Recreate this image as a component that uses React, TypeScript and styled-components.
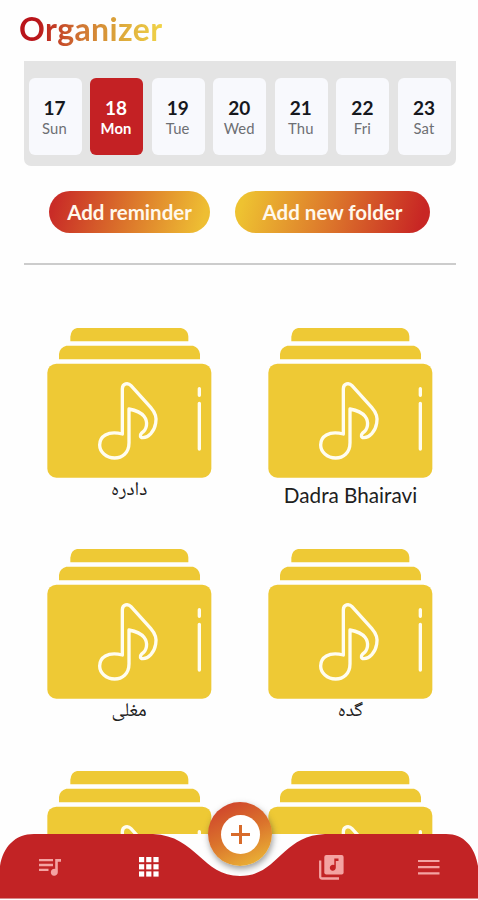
import React from 'react';
import styled, { createGlobalStyle } from 'styled-components';

const GlobalStyle = createGlobalStyle`
  * { box-sizing: border-box; }
  body { margin: 0; background: #fefefe; font-family: Lato, sans-serif; }
  button { font: inherit; border: 0; padding: 0; background: none; cursor: pointer; }
`;

const Screen = styled.div`
  position: relative;
  width: 478px;
  height: 900px;
  overflow: hidden;
  display: flex;
  flex-direction: column;
  background: #fefefe;
`;

const Title = styled.h1`
  margin: 9px 0 0 19px;
  height: 52px;
  align-self: flex-start;
  font-size: 32px;
  line-height: 40px;
  font-weight: 700;
  letter-spacing: 0.4px;
  color: transparent;
  background: linear-gradient(90deg, #b9141a 12%, #d07433 42%, #dba43a 68%, #f1d548 100%);
  background-clip: text;
  -webkit-background-clip: text;
`;

const Week = styled.div`
  display: flex;
  justify-content: space-between;
  width: 432px;
  height: 105px;
  margin-left: 24px;
  padding: 17px 5px 10px 4.5px;
  border-radius: 0 0 7px 7px;
  background: #e4e4e4;
`;

const Day = styled.button<{ $active?: boolean }>`
  display: flex;
  flex-direction: column;
  align-items: center;
  width: 53px;
  height: 77px;
  padding-top: 18px;
  padding-right: 1px;
  border-radius: 6px;
  background: ${(p) => (p.$active ? '#c42124' : '#f8f9fd')};
  color: ${(p) => (p.$active ? '#fff' : '#16181d')};
`;

const DayNumber = styled.span`
  font-size: 19px;
  line-height: 23px;
  font-weight: 700;
`;

const DayName = styled.span<{ $active?: boolean }>`
  font-size: 14.8px;
  line-height: 19px;
  font-weight: ${(p) => (p.$active ? 700 : 400)};
  letter-spacing: 0.15px;
  color: ${(p) => (p.$active ? '#fff' : '#6d6f73')};
`;

const Actions = styled.div`
  display: flex;
  gap: 25px;
  width: 432px;
  margin: 25px 0 0 24px;
  padding: 0 26px 30px 25px;
  border-bottom: 2px solid #cccccc;
`;

const Pill = styled.button<{ $width: number; $from: string; $to: string }>`
  width: ${(p) => p.$width}px;
  height: 42px;
  border-radius: 21px;
  color: #fff8ec;
  font-size: 20.5px;
  font-weight: 700;
  white-space: nowrap;
  background: linear-gradient(105deg, ${(p) => p.$from} 5%, #dc762b 50%, ${(p) => p.$to} 94%);
`;

const Folders = styled.main`
  display: grid;
  grid-template-columns: 165px 165px;
  grid-auto-rows: 221.3px;
  column-gap: 56.4px;
  height: 569px;
  padding: 63px 0 0 46.6px;
  overflow: hidden;
`;

const Folder = styled.div`
  display: flex;
  flex-direction: column;
  align-items: center;
`;

const FolderArt = styled.svg`
  display: block;
  width: 165px;
  height: 150px;
  flex: none;
`;

const FolderName = styled.div<{ $rtl?: boolean }>`
  margin-top: ${(p) => (p.$rtl ? 1 : 5)}px;
  font-family: ${(p) => (p.$rtl ? '"Noto Naskh Arabic", "DejaVu Sans", sans-serif' : 'Lato, sans-serif')};
  font-size: ${(p) => (p.$rtl ? 19.5 : 20.7)}px;
  line-height: 24px;
  color: #202020;
  white-space: nowrap;
`;

const NavBar = styled.nav`
  position: absolute;
  left: 0;
  bottom: 0;
  width: 478px;
  height: 66px;
`;

const NavShape = styled.svg`
  display: block;
`;

const NavItems = styled.div`
  position: absolute;
  inset: 0;
  display: grid;
  grid-template-columns: 100px 98px 84px 98px 98px;
  align-items: center;
  justify-items: center;
`;

const NavButton = styled.button`
  display: flex;
  color: #f4a3a2;
`;

const AddButton = styled.button`
  position: absolute;
  left: 208px;
  top: -32px;
  display: grid;
  place-items: center;
  width: 64px;
  height: 64px;
  border-radius: 50%;
  background: linear-gradient(155deg, #cf432c 8%, #db742c 50%, #ebb737 94%);
  box-shadow: 1px 3px 6px rgba(60, 60, 60, 0.5);
`;

const AddCore = styled.span`
  display: grid;
  place-items: center;
  width: 39px;
  height: 39px;
  border-radius: 50%;
  background: #fff;
`;

const week = [
  ['17', 'Sun'],
  ['18', 'Mon'],
  ['19', 'Tue'],
  ['20', 'Wed'],
  ['21', 'Thu'],
  ['22', 'Fri'],
  ['23', 'Sat'],
];

const folders = [
  { id: 1, name: 'دادره', rtl: true },
  { id: 2, name: 'Dadra Bhairavi' },
  { id: 3, name: 'مغلی', rtl: true },
  { id: 4, name: 'گده', rtl: true },
  { id: 5, name: '' },
  { id: 6, name: '' },
];

const FolderIcon = () => (
  <FolderArt viewBox="0 0 495 450">
    <g fill="#eec935">
      <path d="M70 40V26Q72 4 90 0H402Q422 4 424 24V40Z" />
      <path d="M36 94V78Q38 58 58 53H438Q456 58 459 78V94Z" />
      <rect x="1" y="107" width="492" height="342" rx="27" />
    </g>
    <g fill="none" stroke="#fffdf0" strokeWidth="10" strokeLinejoin="round" strokeLinecap="round">
      <path d="M226 318V183C226 166 243 163 252 173L311 238C325 254 330 270 326 286C322 311 304 329 288 329C279 330 278 321 284 315C300 305 304 282 291 265C281 252 262 246 246 243V344C246 375 225 390 203 390C177 390 158 371 158 351C158 326 181 307 226 318Z" />
      <path d="M457 182V202M457 226V363" />
    </g>
  </FolderArt>
);

const QueueIcon = () => (
  <svg width="24" height="20" viewBox="0 0 24 20">
    <path d="M1 3.2H15M1 8H15M1 12.8H10.5" stroke="currentColor" strokeWidth="2.3" />
    <path d="M17.2 2H23v2.7h-3.2v10.6a3.5 3.5 0 1 1-2.6-3.4Z" fill="currentColor" />
  </svg>
);

const GridIcon = () => (
  <svg width="20" height="20" viewBox="0 0 20 20" fill="#fff">
    {[0, 7.2, 14.4].map((y) =>
      [0, 7.2, 14.4].map((x) => <rect key={`${x}-${y}`} x={x} y={y} width="5.2" height="5.2" />),
    )}
  </svg>
);

const LibraryIcon = () => (
  <svg width="25" height="25" viewBox="0 0 25 25">
    <path d="M1.2 5.5V21.5Q1.2 23.5 3.2 23.5H20" fill="none" stroke="currentColor" strokeWidth="2.3" />
    <rect x="5.3" y="0" width="19.3" height="19.4" rx="2" fill="currentColor" />
    <path d="M15.3 3.5H19.5V6H16.8V12.7a3 3 0 1 1-1.5-2.6Z" fill="#c42124" />
  </svg>
);

const MenuIcon = () => (
  <svg width="22" height="17" viewBox="0 0 22 17">
    <path d="M0 2H21.5M0 8.2H21.5M0 14.4H21.5" stroke="currentColor" strokeWidth="2.2" />
  </svg>
);

export default function App() {
  return (
    <>
      <GlobalStyle />
      <Screen>
        <Title>Organizer</Title>
        <Week>
          {week.map(([number, name]) => (
            <Day key={number} $active={number === '18'}>
              <DayNumber>{number}</DayNumber>
              <DayName $active={number === '18'}>{name}</DayName>
            </Day>
          ))}
        </Week>
        <Actions>
          <Pill $width={161} $from="#c92c27" $to="#eebe33">Add reminder</Pill>
          <Pill $width={195} $from="#eec231" $to="#c82624">Add new folder</Pill>
        </Actions>
        <Folders>
          {folders.map((folder) => (
            <Folder key={folder.id}>
              <FolderIcon />
              <FolderName $rtl={folder.rtl} dir={folder.rtl ? 'rtl' : 'ltr'}>{folder.name}</FolderName>
            </Folder>
          ))}
        </Folders>
        <NavBar>
          <NavShape width="478" height="66" viewBox="0 0 478 66">
            <path d="M0 64V32C3 13 15 0 34 0H153C197 2 202 42 240 42C278 42 281 2 325 0H446C464 0 475 13 478 32V64Z" fill="#c22325" />
            <path d="M0 64.5H478" stroke="#d9898a" />
          </NavShape>
          <NavItems>
            <NavButton aria-label="Queue"><QueueIcon /></NavButton>
            <NavButton aria-label="Organizer"><GridIcon /></NavButton>
            <span />
            <NavButton aria-label="Library"><LibraryIcon /></NavButton>
            <NavButton aria-label="Menu"><MenuIcon /></NavButton>
          </NavItems>
          <AddButton aria-label="Add">
            <AddCore>
              <svg width="19" height="19" viewBox="0 0 19 19">
                <path d="M9.5 0V19M0 9.5H19" stroke="#d86b2b" strokeWidth="3" />
              </svg>
            </AddCore>
          </AddButton>
        </NavBar>
      </Screen>
    </>
  );
}
